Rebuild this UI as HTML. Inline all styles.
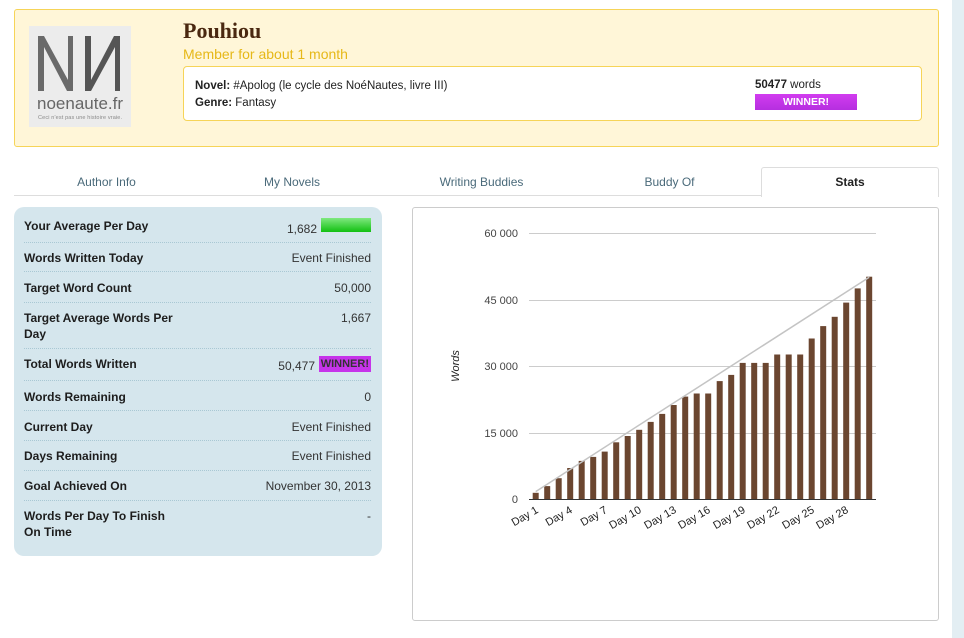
<!DOCTYPE html>
<html><head><meta charset="utf-8"><style>
*{margin:0;padding:0;box-sizing:border-box}
body{width:964px;height:638px;background:#fff;font-family:"Liberation Sans",sans-serif;position:relative;overflow:hidden;color:#222}
.a{position:absolute}
.hdr{left:14px;top:9px;width:925px;height:138px;background:#fff6d8;border:1px solid #f6d458;border-radius:3px}
.av{left:29px;top:26px;width:102px;height:101px;background:#ececec}
.inner{left:183px;top:66px;width:739px;height:55px;background:#fff;border:1px solid #f6d458;border-radius:4px}
.tab{top:168px;height:28px;font-size:12px;color:#4a6a7a;text-align:center;line-height:29px}
.panel{left:14px;top:207px;width:368px;height:349px;background:#d5e6ed;border-radius:10px}
.row{position:absolute;left:24px;width:347px;font-size:12px}
.row b{position:absolute;left:0;font-weight:bold;color:#1d1d1d;width:160px;line-height:16px}
.row span{position:absolute;right:0;color:#333;line-height:16px}
.sep{position:absolute;left:24px;width:347px;border-top:1px dotted #a9c8d4}
.win{background:#c634ea;color:#fff;font-weight:bold;font-size:11px;padding:0 2px}
</style></head><body>
<div class="a" style="left:952px;top:0;width:12px;height:638px;background:#e3eef3"></div>
<div class="a hdr"></div>
<div class="a av">
<svg width="102" height="101" viewBox="0 0 102 101">
<path d="M9 10h6l24 44V10h5v55h-6L15 21v44H9z" fill="#6a6a6a"/>
<path d="M56 65h6l24-44v44h5V10h-6L62 54V10h-6z" fill="#555"/>
<text x="8" y="83" font-family="Liberation Sans" font-size="17" fill="#666" textLength="86">noenaute.fr</text>
<text x="9" y="93" font-family="Liberation Sans" font-size="5.5" fill="#888" textLength="84">Ceci n'est pas une histoire vraie.</text>
</svg></div>
<div class="a" style="left:183px;top:18px;font-family:'Liberation Serif',serif;font-weight:bold;font-size:22px;color:#4a2810">Pouhiou</div>
<div class="a" style="left:183px;top:46px;font-size:14px;color:#e6b818">Member for about 1 month</div>
<div class="a inner"></div>
<div class="a" style="left:195px;top:78px;font-size:11.5px;line-height:17px"><b>Novel:</b> #Apolog (le cycle des NoéNautes, livre III)<br><b>Genre:</b> Fantasy</div>
<div class="a" style="left:755px;top:79px;font-size:11.5px"><b>50477</b> words</div>
<div class="a" style="left:755px;top:94px;width:102px;height:16px;background:linear-gradient(#d23cf0,#b52fe0);color:#fff;font-weight:bold;font-size:10.5px;text-align:center;line-height:16px">WINNER!</div>

<div class="a" style="left:14px;top:195px;width:925px;border-top:1px solid #ddd"></div>
<div class="a tab" style="left:14px;width:185px">Author Info</div>
<div class="a tab" style="left:199px;width:186px">My Novels</div>
<div class="a tab" style="left:385px;width:193px">Writing Buddies</div>
<div class="a tab" style="left:578px;width:183px">Buddy Of</div>
<div class="a tab" style="left:761px;top:167px;width:178px;height:30px;background:#fff;border:1px solid #ddd;border-bottom:none;border-radius:3px 3px 0 0;color:#222;font-weight:bold">Stats</div>

<div class="a panel"></div>
<div class="row" style="top:218px"><b>Your Average Per Day</b><span style="right:54px;top:3px">1,682</span><i style="position:absolute;right:0;top:0;width:50px;height:14px;background:linear-gradient(#7fe87f,#12c012)"></i></div>
<div class="sep" style="top:242px"></div>
<div class="row" style="top:250px"><b>Words Written Today</b><span>Event Finished</span></div>
<div class="sep" style="top:271px"></div>
<div class="row" style="top:280px"><b>Target Word Count</b><span>50,000</span></div>
<div class="sep" style="top:302px"></div>
<div class="row" style="top:310px"><b>Target Average Words Per Day</b><span>1,667</span></div>
<div class="sep" style="top:348px"></div>
<div class="row" style="top:356px"><b>Total Words Written</b><span style="right:56px;top:2px">50,477</span><span class="win" style="top:0">WINNER!</span></div>
<div class="sep" style="top:380px"></div>
<div class="row" style="top:389px"><b>Words Remaining</b><span>0</span></div>
<div class="sep" style="top:410px"></div>
<div class="row" style="top:419px"><b>Current Day</b><span>Event Finished</span></div>
<div class="sep" style="top:440px"></div>
<div class="row" style="top:448px"><b>Days Remaining</b><span>Event Finished</span></div>
<div class="sep" style="top:470px"></div>
<div class="row" style="top:478px"><b>Goal Achieved On</b><span>November 30, 2013</span></div>
<div class="sep" style="top:500px"></div>
<div class="row" style="top:508px"><b>Words Per Day To Finish On Time</b><span>-</span></div>

<div class="a" style="left:412px;top:207px;width:527px;height:414px;border:1px solid #ccc;border-radius:3px"></div>
<svg class="a" style="left:0;top:0" width="964" height="638">
<g stroke="#ccc" stroke-width="1"><path d="M529 233.5H876M529 300.5H876M529 366.5H876M529 433.5H876"/></g>
<path d="M529 499.5H876" stroke="#333"/>
<g font-family="Liberation Sans" font-size="11" fill="#444" text-anchor="end">
<text x="518" y="237">60 000</text><text x="518" y="304">45 000</text><text x="518" y="370">30 000</text><text x="518" y="437">15 000</text><text x="518" y="503">0</text>
</g>
<text transform="translate(459,366) rotate(-90)" font-family="Liberation Sans" font-size="11" font-style="italic" fill="#222" text-anchor="middle">Words</text>
<g fill="#6b4630">
<rect x="532.7" y="492.8" width="6" height="6.2"/><rect x="544.2" y="486.1" width="6" height="12.9"/><rect x="555.7" y="478.2" width="6" height="20.8"/><rect x="567.2" y="468" width="6" height="31"/><rect x="578.7" y="460.9" width="6" height="38.1"/><rect x="590.2" y="456.9" width="6" height="42.1"/><rect x="601.7" y="451.6" width="6" height="47.4"/><rect x="613.2" y="442.3" width="6" height="56.7"/><rect x="624.7" y="436" width="6" height="63"/><rect x="636.2" y="429.8" width="6" height="69.2"/><rect x="647.7" y="421.9" width="6" height="77.1"/><rect x="659.2" y="413.9" width="6" height="85.1"/><rect x="670.7" y="405" width="6" height="94"/><rect x="682.2" y="396.6" width="6" height="102.4"/><rect x="693.7" y="393.5" width="6" height="105.5"/><rect x="705.2" y="393.5" width="6" height="105.5"/><rect x="716.7" y="381.1" width="6" height="117.9"/><rect x="728.2" y="374.9" width="6" height="124.1"/><rect x="739.7" y="362.9" width="6" height="136.1"/><rect x="751.2" y="362.9" width="6" height="136.1"/><rect x="762.7" y="362.9" width="6" height="136.1"/><rect x="774.2" y="354.5" width="6" height="144.5"/><rect x="785.7" y="354.5" width="6" height="144.5"/><rect x="797.2" y="354.5" width="6" height="144.5"/><rect x="808.7" y="338.5" width="6" height="160.5"/><rect x="820.2" y="326.1" width="6" height="172.9"/><rect x="831.7" y="316.8" width="6" height="182.2"/><rect x="843.2" y="302.6" width="6" height="196.4"/><rect x="854.7" y="288.4" width="6" height="210.6"/><rect x="866.2" y="276.7" width="6" height="222.3"/>
</g>
<path d="M535.7 491.6L869.2 277.3" stroke="#c4c4c4" stroke-width="1.5"/>
<g font-family="Liberation Sans" font-size="11" fill="#222" text-anchor="end">
<text transform="translate(539,512) rotate(-30)">Day 1</text>
<text transform="translate(573,512) rotate(-30)">Day 4</text>
<text transform="translate(608,512) rotate(-30)">Day 7</text>
<text transform="translate(642,512) rotate(-30)">Day 10</text>
<text transform="translate(677,512) rotate(-30)">Day 13</text>
<text transform="translate(711,512) rotate(-30)">Day 16</text>
<text transform="translate(746,512) rotate(-30)">Day 19</text>
<text transform="translate(780,512) rotate(-30)">Day 22</text>
<text transform="translate(815,512) rotate(-30)">Day 25</text>
<text transform="translate(849,512) rotate(-30)">Day 28</text>
</g>
</svg>
</body></html>
